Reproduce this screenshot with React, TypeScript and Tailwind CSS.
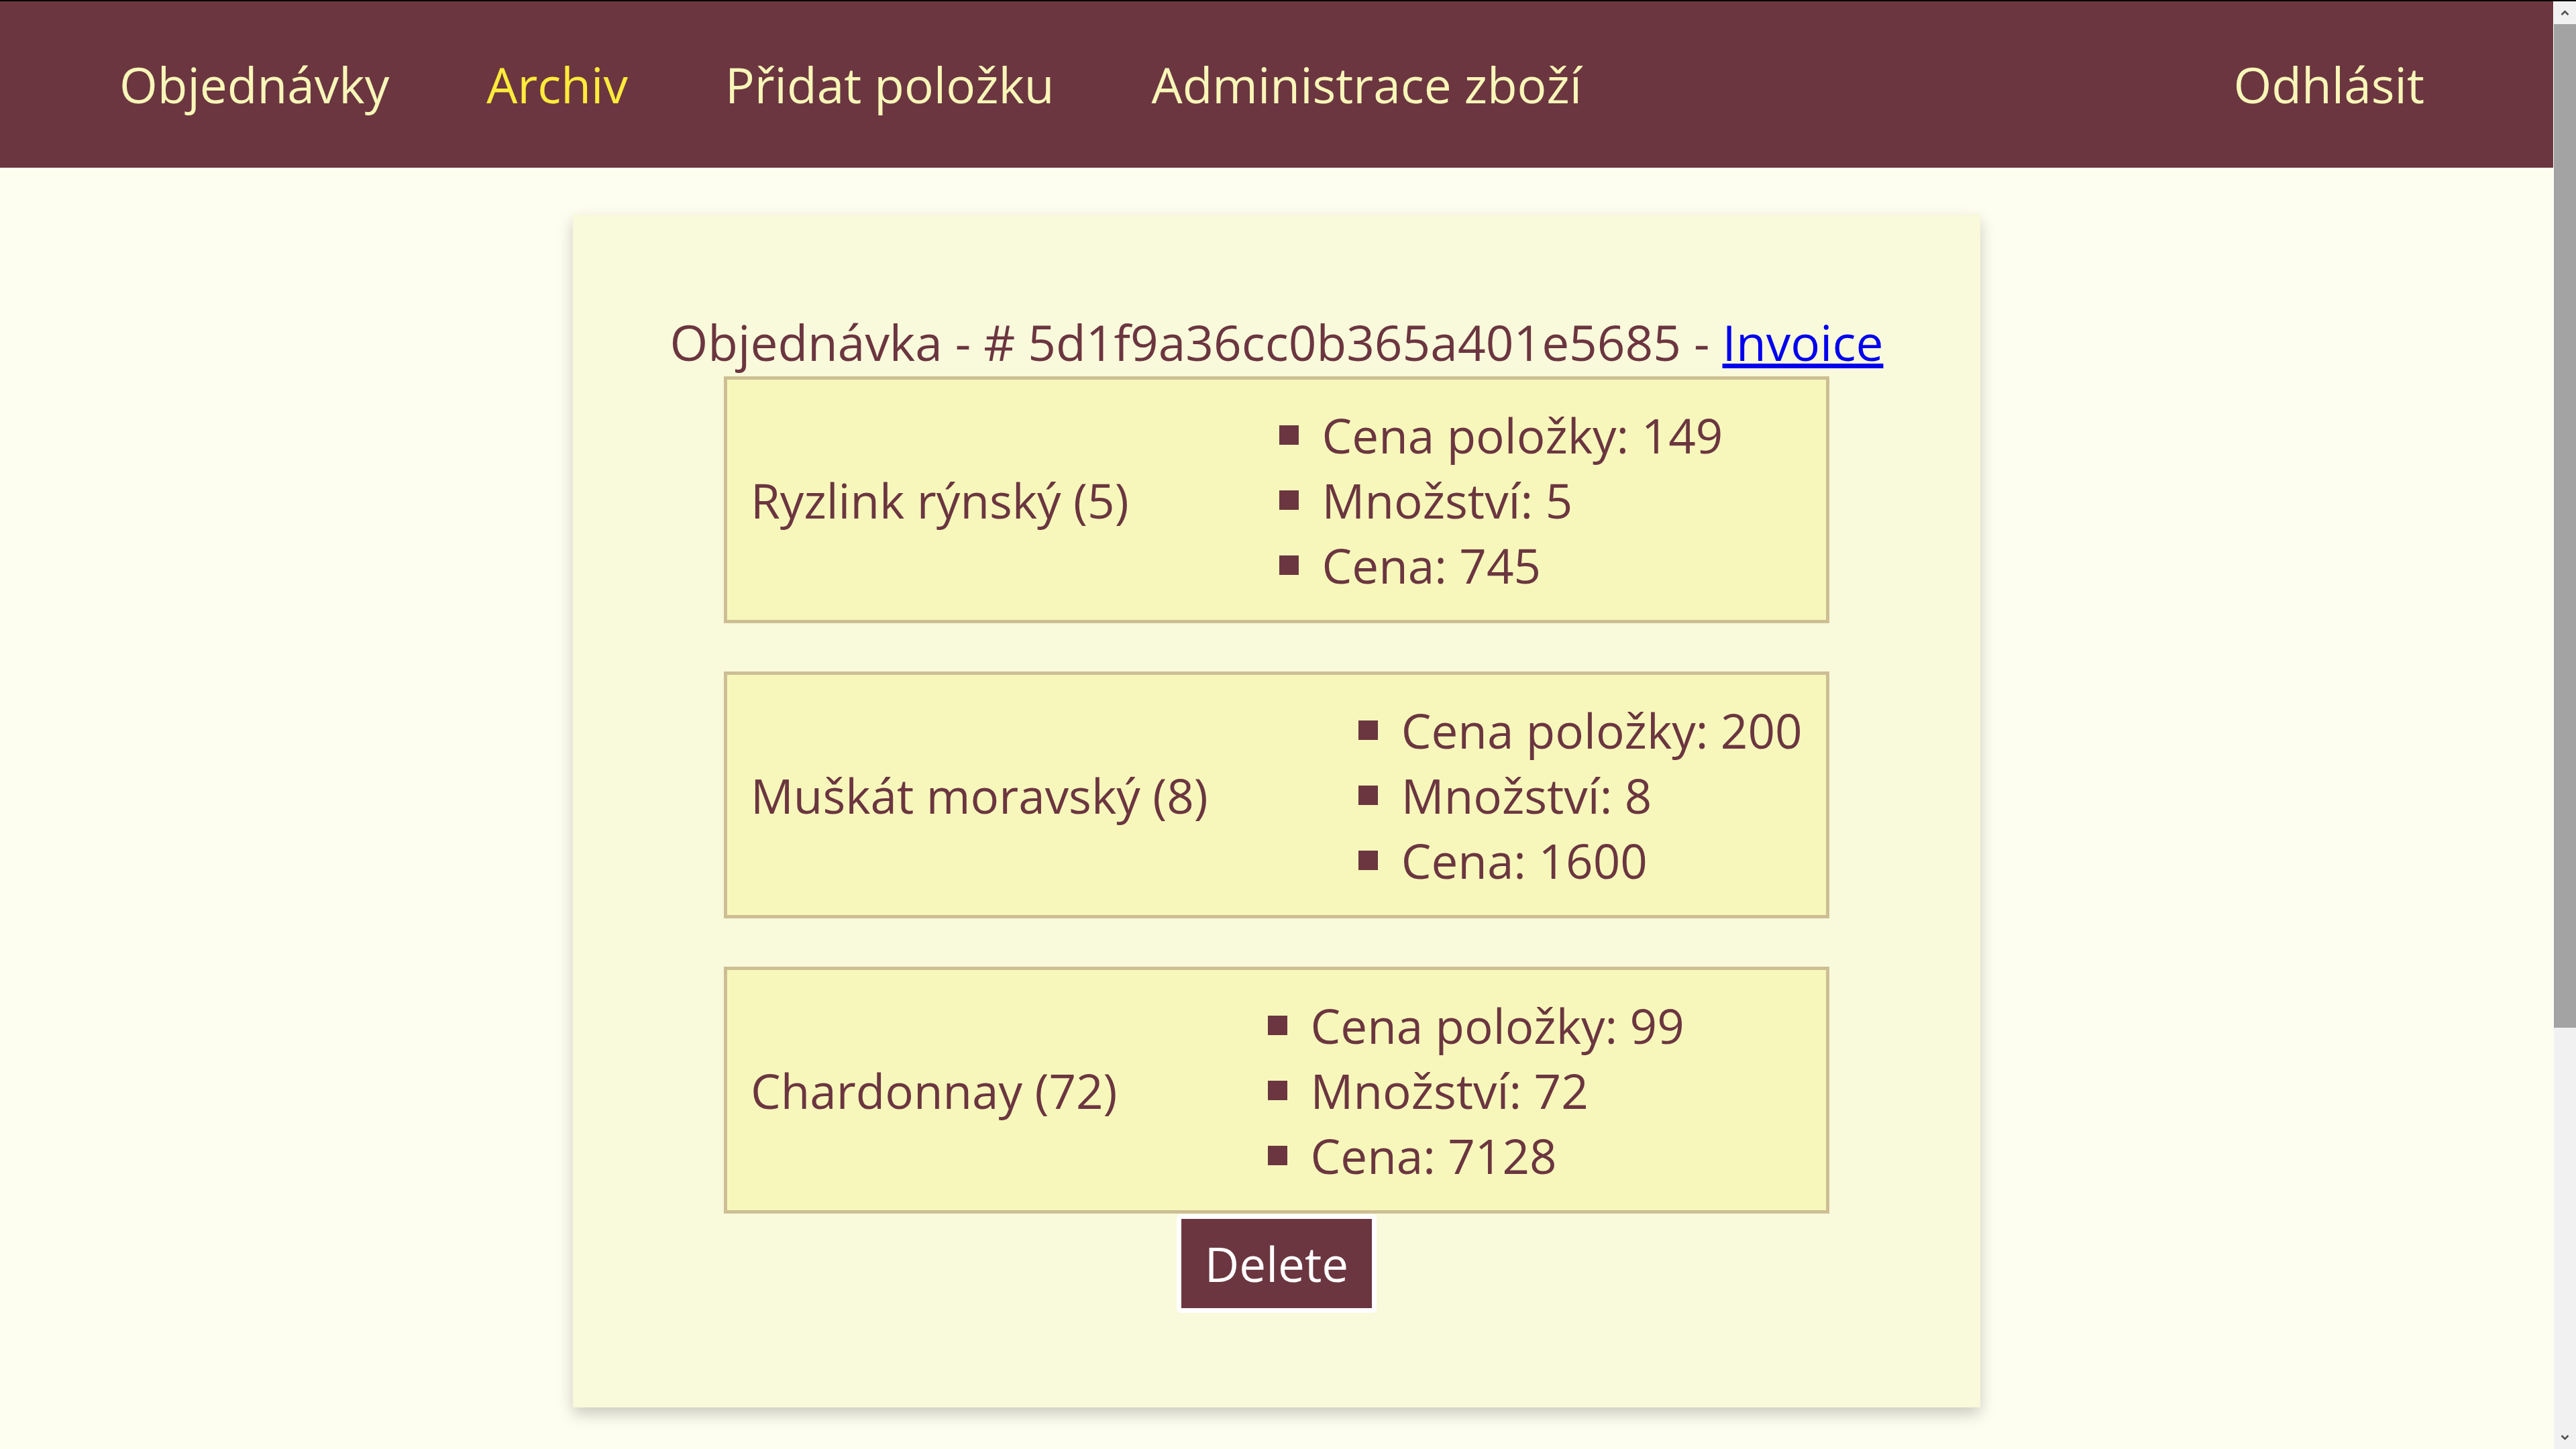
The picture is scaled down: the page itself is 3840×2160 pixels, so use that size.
const maroon = "text-[#6b3640]";

type Line = { name: string; price: number; qty: number; total: number };

const lines: Line[] = [
  { name: "Ryzlink rýnský", price: 149, qty: 5, total: 745 },
  { name: "Muškát moravský", price: 200, qty: 8, total: 1600 },
  { name: "Chardonnay", price: 99, qty: 72, total: 7128 },
];

function OrderLine({ line, first }: { line: Line; first: boolean }) {
  return (
    <div
      className={`mx-auto flex h-[368px] w-[1648px] items-center whitespace-nowrap border-[5px] border-[#cdbe94] bg-[#f7f7bb] pl-[35px] text-[71px] ${
        first ? "" : "mt-[72px]"
      }`}
    >
      <span className="shrink-0 leading-[97px]">
        {line.name} ({line.qty})
      </span>
      <ul className="ml-[224px] flex shrink-0 flex-col">
        <li className="flex items-center leading-[97px]">
          <span className="mr-[35px] h-[29px] w-[29px] bg-[#6b3640]" />
          Cena položky: {line.price}
        </li>
        <li className="flex items-center leading-[97px]">
          <span className="mr-[35px] h-[29px] w-[29px] bg-[#6b3640]" />
          Množství: {line.qty}
        </li>
        <li className="flex items-center leading-[97px]">
          <span className="mr-[35px] h-[29px] w-[29px] bg-[#6b3640]" />
          Cena: {line.total}
        </li>
      </ul>
    </div>
  );
}

function Scrollbar() {
  return (
    <div className="flex w-[34px] shrink-0 flex-col border-l border-white bg-[#f1f1f1]">
      <div className="flex h-[34px] shrink-0 items-center justify-center">
        <svg width="13" height="8" viewBox="0 0 13 8">
          <polyline points="1.5,7 6.5,2 11.5,7" fill="none" stroke="#505050" strokeWidth="2.5" />
        </svg>
      </div>
      <div className="h-[1496px] shrink-0 bg-[#a3a3a3]" />
      <div className="flex-1" />
      <div className="flex h-[34px] shrink-0 items-center justify-center">
        <svg width="13" height="8" viewBox="0 0 13 8">
          <polyline points="1.5,1 6.5,6 11.5,1" fill="none" stroke="#505050" strokeWidth="2.5" />
        </svg>
      </div>
    </div>
  );
}

export default function App() {
  return (
    <div className="flex h-screen flex-col overflow-hidden bg-black font-['Open_Sans',sans-serif] text-[73px]">
      <div className="h-[2px] shrink-0 bg-black" />
      <div className="flex min-h-0 flex-1">
        <div className="min-w-0 flex-1 bg-[#fdfdf0]">
          {/* top menu */}
          <nav className="flex h-[248px] items-center whitespace-nowrap bg-[#6b3640] pl-[178px] pr-[192px] leading-[102px] text-[#f8f6b8]">
            <div className="flex gap-[145px]">
              <a href="#">Objednávky</a>
              <a href="#" className="text-[#ffeb3b]">
                Archiv
              </a>
              <a href="#">Přidat položku</a>
              <a href="#">Administrace zboží</a>
            </div>
            <a href="#" className="ml-auto">
              Odhlásit
            </a>
          </nav>

          {/* order card */}
          <main
            className={`mx-auto mt-[70px] w-[2098px] bg-[#f9f9db] pb-[141px] pt-[139px] shadow-[0_10px_22px_rgba(0,0,0,0.2)] ${maroon}`}
          >
            <h2 className="text-center leading-[102px]">
              Objednávka - # 5d1f9a36cc0b365a401e5685 -{" "}
              <a href="#" className="text-[#0000ee] underline">
                Invoice
              </a>
            </h2>
            {lines.map((l, i) => (
              <OrderLine key={l.name} line={l} first={i === 0} />
            ))}
            <button className="mx-auto mt-px flex h-[147px] w-[298px] items-center justify-center rounded-[6px] border-[7px] border-white bg-[#6b3640] text-[71px] leading-[97px] text-white">
              Delete
            </button>
          </main>
        </div>
        <Scrollbar />
      </div>
    </div>
  );
}
